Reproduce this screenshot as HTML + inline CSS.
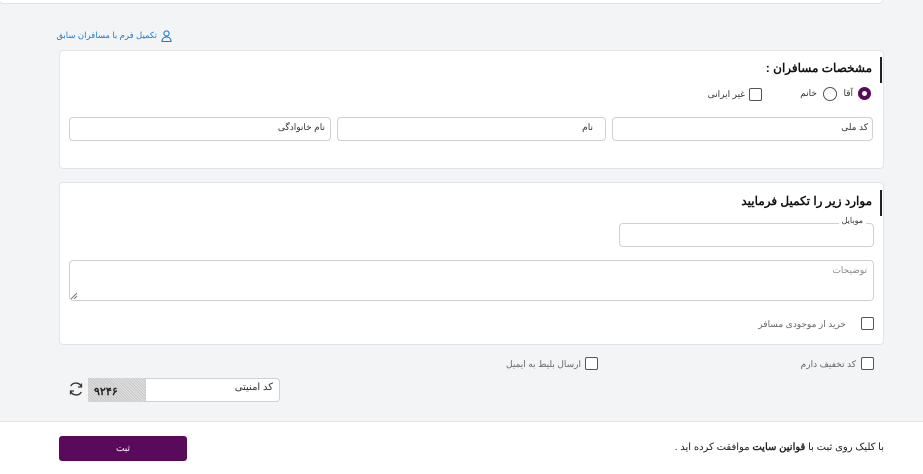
<!DOCTYPE html>
<html><head><meta charset="utf-8"><style>
*{box-sizing:border-box;margin:0;padding:0}
body{width:923px;height:474px;background:#f3f4f6;position:relative;overflow:hidden;font-family:"Liberation Sans","Noto Sans CJK SC",sans-serif;direction:rtl;color:#222}
.a{position:absolute}
.card{position:absolute;background:#fff;border:1px solid #e3e4e7;border-radius:4px}
.bar{position:absolute;width:2px;background:#222}
.inp{position:absolute;background:#fff;border:1px solid #cfd1d5;border-radius:4px}
.lbl{position:absolute;font-size:9px;color:#333;white-space:nowrap}
.cb{position:absolute;width:13px;height:13px;border:1px solid #555;border-radius:2px;background:#fff}
.t{position:absolute;font-size:9px;color:#666;white-space:nowrap}
</style></head><body>
<div class="card" style="left:-2px;top:-10px;width:886px;height:14px;border-radius:0 0 6px 6px"></div>
<div class="t" style="right:766px;top:30px;color:#1a7fd6;font-size:8.5px">تکمیل فرم با مسافران سابق</div>
<svg class="a" style="left:161px;top:30px" width="11" height="12" viewBox="0 0 11 12"><circle cx="5.5" cy="3.5" r="2.6" fill="none" stroke="#1a7fd6" stroke-width="1.1"/><path d="M1 11.5c0-3 2-4.5 4.5-4.5s4.5 1.5 4.5 4.5z" fill="none" stroke="#1a7fd6" stroke-width="1.1"/></svg>

<div class="card" style="left:59px;top:50px;width:825px;height:119px"></div>
<div class="bar" style="left:880px;top:57px;height:26px"></div>
<div class="a" style="right:51px;top:61px;font-size:12px;font-weight:bold;color:#111">مشخصات مسافران :</div>
<div class="a" style="left:858px;top:87px;width:13px;height:13px;border-radius:50%;background:#5a0a5a"></div>
<div class="a" style="left:862px;top:91px;width:5px;height:5px;border-radius:50%;background:#fff"></div>
<div class="t" style="right:70px;top:88px;color:#333">آقا</div>
<div class="a" style="left:823px;top:87px;width:14px;height:14px;border-radius:50%;border:1px solid #555"></div>
<div class="t" style="right:106px;top:88px;color:#333">خانم</div>
<div class="cb" style="left:749px;top:88px"></div>
<div class="t" style="right:178px;top:89px;color:#333">غیر ایرانی</div>
<div class="inp" style="left:612px;top:117px;width:261px;height:24px"></div>
<div class="lbl" style="right:55px;top:122px">کد ملی</div>
<div class="inp" style="left:337px;top:117px;width:269px;height:24px"></div>
<div class="lbl" style="right:330px;top:122px">نام</div>
<div class="inp" style="left:69px;top:117px;width:262px;height:24px"></div>
<div class="lbl" style="right:598px;top:122px">نام خانوادگی</div>

<div class="card" style="left:59px;top:182px;width:825px;height:163px"></div>
<div class="bar" style="left:880px;top:190px;height:26px"></div>
<div class="a" style="right:51px;top:194px;font-size:12px;font-weight:bold;color:#111">موارد زیر را تکمیل فرمایید</div>
<div class="inp" style="left:619px;top:223px;width:255px;height:24px"></div>
<div class="lbl" style="right:57px;top:216px;font-size:8px;background:#fff;padding:0 3px">موبایل</div>
<div class="inp" style="left:69px;top:260px;width:805px;height:41px"></div>
<div class="t" style="right:56px;top:265px;color:#888">توضیحات</div>
<svg class="a" style="left:70px;top:292px" width="8" height="8"><path d="M1 7L7 1M4 7L7 4" stroke="#777"/></svg>
<div class="cb" style="left:861px;top:317px"></div>
<div class="t" style="right:77px;top:319px">خرید از موجودی مسافر</div>

<div class="cb" style="left:861px;top:357px"></div>
<div class="t" style="right:67px;top:359px">کد تخفیف دارم</div>
<div class="cb" style="left:585px;top:357px"></div>
<div class="t" style="right:342px;top:359px">ارسال بلیط به ایمیل</div>

<svg class="a" style="left:68px;top:381px" width="16" height="16" viewBox="0 0 16 16" fill="none" stroke="#333" stroke-width="1.3"><path d="M13.5 6A6 6 0 0 0 2.7 5"/><path d="M2.5 10A6 6 0 0 0 13.3 11"/><path d="M13.5 2.5V6H10"/><path d="M2.5 13.5V10H6"/></svg>
<div class="a" style="left:88px;top:378px;width:58px;height:24px;background:repeating-linear-gradient(45deg,#c8c8c8 0 1px,#e0e0e0 1px 2px);direction:ltr;font-size:11px;font-weight:bold;color:#222;padding:7px 0 0 6px">۹۲۴۶</div>
<div class="inp" style="left:145px;top:378px;width:135px;height:24px;border-radius:0 4px 4px 0"></div>
<div class="lbl" style="right:650px;top:382px;font-size:10px">کد امنیتی</div>

<div class="a" style="left:0;top:421px;width:923px;height:53px;background:#fff;border-top:1px solid #e3e4e7"></div>
<div class="a" style="left:59px;top:436px;width:128px;height:25px;background:#5a0a5a;border-radius:3px;color:#fff;font-size:9px;text-align:center;line-height:25px">ثبت</div>
<div class="a" style="right:39px;top:442px;font-size:10px;color:#222">با کلیک روی ثبت با <b>قوانین سایت</b> موافقت کرده اید .</div>
</body></html>
